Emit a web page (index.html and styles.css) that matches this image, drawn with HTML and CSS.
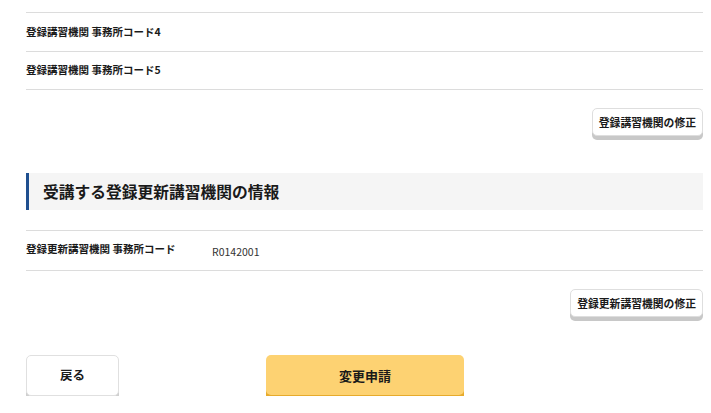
FILE: index.html
```html
<!DOCTYPE html>
<html lang="ja">
<head>
<meta charset="utf-8">
<link rel="stylesheet" href="styles.css">
</head>
<body>
<div class="page">
  <div class="list">
    <div class="row"><span class="label">登録講習機関 事務所コード4</span></div>
    <div class="row"><span class="label">登録講習機関 事務所コード5</span></div>
  </div>
  <div class="actions">
    <button class="btn-sub">登録講習機関の修正</button>
  </div>

  <h2 class="section-title">受講する登録更新講習機関の情報</h2>

  <div class="list list-second">
    <div class="row"><span class="label label-wide">登録更新講習機関 事務所コード</span><span class="value">R0142001</span></div>
  </div>
  <div class="actions">
    <button class="btn-sub">登録更新講習機関の修正</button>
  </div>

  <div class="footer">
    <button class="btn-back">戻る</button>
    <button class="btn-primary">変更申請</button>
  </div>
</div>
</body>
</html>
```

FILE: styles.css
```css
* { box-sizing: border-box; }
html, body { margin: 0; padding: 0; background: #fff; }
body {
  font-family: "Noto Sans CJK JP", "Noto Sans", sans-serif;
  color: #1a1a1a;
}
.page {
  padding: 12px 8px 0 26px;
}
.list {
  border-top: 1px solid #dcdcdc;
}
.row {
  display: flex;
  align-items: center;
  height: 39px;
  border-bottom: 1px solid #dcdcdc;
}
.list .row + .row { height: 38px; }
.label {
  font-size: 10.5px;
  font-weight: 700;
  line-height: 1;
}
.label-wide {
  width: 186px;
  position: relative;
  top: -1px;
}
.value {
  font-size: 10.5px;
  line-height: 1;
  color: #333;
  position: relative;
  top: 2px;
}
.list-second .row { height: 40px; }
.actions {
  display: flex;
  justify-content: flex-end;
  margin-top: 18px;
}
.btn-sub {
  font-family: inherit;
  font-size: 10.8px;
  font-weight: 700;
  color: #1a1a1a;
  background: #fff;
  border: 1px solid #dedede;
  border-radius: 5px;
  box-shadow: 0 4px 0 #c8c8c8;
  height: 28px;
  padding: 0 6px;
  margin-bottom: 4px;
  line-height: 1;
  cursor: pointer;
}
.section-title {
  margin: 33px 0 0;
  height: 37px;
  display: flex;
  align-items: center;
  background: #f5f5f5;
  border-left: 3px solid #1f4f8f;
  padding-left: 14px;
  font-size: 15.75px;
  font-weight: 700;
  color: #1a1a1a;
}
.list-second { margin-top: 20px; }
.footer {
  display: flex;
  margin-top: 34px;
  gap: 147px;
}
.btn-back, .btn-primary {
  font-family: inherit;
  font-weight: 700;
  font-size: 12.5px;
  color: #1a1a1a;
  border-radius: 5px;
  line-height: 1;
  cursor: pointer;
}
.btn-back {
  width: 93px;
  height: 41px;
  background: #fff;
  border: 1px solid #e0e0e0;
  box-shadow: 0 5px 0 #cfcfcf;
}
.btn-primary {
  width: 198px;
  height: 40px;
  background: #fdd272;
  border: none;
  box-shadow: 0 5px 0 #e7ab2c;
  font-size: 13px;
}
```
